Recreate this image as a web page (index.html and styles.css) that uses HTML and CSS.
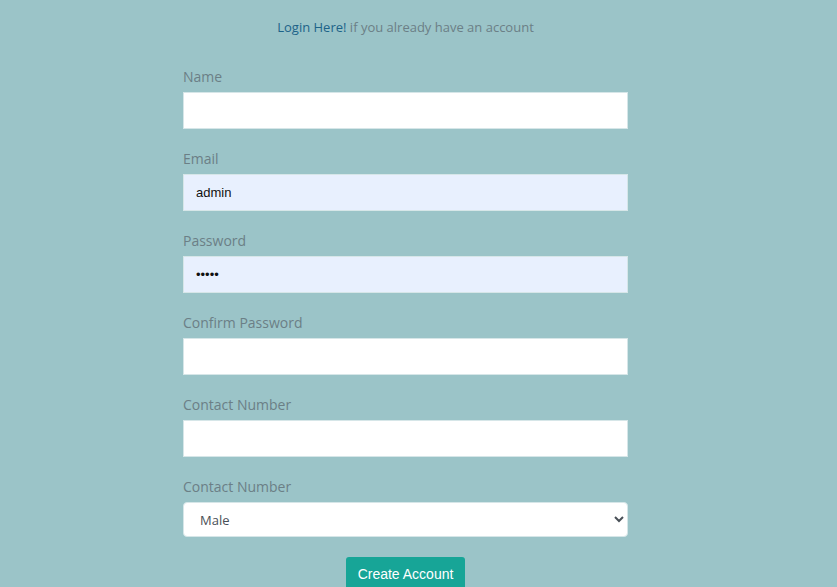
FILE: index.html
```html
<!DOCTYPE html>
<html>
<head>
<meta charset="utf-8">
<link rel="stylesheet" href="styles.css">
</head>
<body>
<div class="page">
  <p class="intro"><a class="link" href="#">Login Here!</a> if you already have an account</p>
  <form class="form">
    <div class="group">
      <label class="label">Name</label>
      <input class="field" type="text">
    </div>
    <div class="group">
      <label class="label">Email</label>
      <input class="field filled" type="text" value="admin">
    </div>
    <div class="group">
      <label class="label">Password</label>
      <input class="field filled" type="password" value="admin">
    </div>
    <div class="group">
      <label class="label">Confirm Password</label>
      <input class="field" type="password">
    </div>
    <div class="group">
      <label class="label">Contact Number</label>
      <input class="field" type="text">
    </div>
    <div class="group">
      <label class="label">Contact Number</label>
      <select class="select">
        <option>Male</option>
        <option>Female</option>
      </select>
    </div>
    <div class="actions">
      <button class="btn" type="button">Create Account</button>
    </div>
  </form>
</div>
</body>
</html>
```
FILE: styles.css
```css
html, body {
  margin: 0;
  padding: 0;
  background: #9bc4c8;
  height: 100%;
  overflow: hidden;
}
.page {
  width: 445px;
  margin-left: 183px;
  font-family: "Open Sans", "Liberation Sans", sans-serif;
  font-size: 14px;
  color: #6b7f86;
}
.intro {
  margin: 0;
  padding-top: 17px;
  line-height: 20px;
  text-align: center;
  font-size: 13px;
  color: #6b7f86;
}
.link {
  color: #1d6388;
  text-decoration: none;
}
.form {
  margin: 30px 0 0;
}
.group {
  margin-bottom: 20px;
}
.label {
  display: block;
  line-height: 20px;
  margin-bottom: 5px;
  color: #6b7f86;
}
.field {
  display: block;
  box-sizing: border-box;
  width: 100%;
  height: 37px;
  margin: 0;
  padding: 0 12px;
  border: 1px solid #d6e6e8;
  background: #ffffff;
  font-family: "Liberation Sans", Arial, sans-serif;
  font-size: 13px;
  color: #111;
  outline: none;
}
.filled {
  background: #e8f0fe;
}
.select {
  display: block;
  box-sizing: border-box;
  width: 100%;
  height: 35px;
  margin: 0;
  padding: 0 12px;
  border: 1px solid #d6e6e8;
  border-radius: 4px;
  background: #ffffff;
  font-family: "Open Sans", "Liberation Sans", sans-serif;
  font-size: 13px;
  color: #495057;
}
.actions {
  display: flex;
  justify-content: center;
}
.btn {
  height: 34px;
  padding: 0 12px;
  border: none;
  border-radius: 3px;
  background: #17a597;
  color: #ffffff;
  font-family: "Liberation Sans", Arial, sans-serif;
  font-size: 14px;
}
```
